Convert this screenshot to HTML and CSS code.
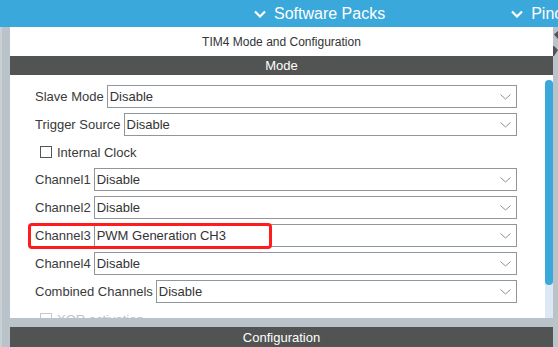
FILE: index.html
```html
<!DOCTYPE html>
<html>
<head>
<meta charset="utf-8">
<link rel="stylesheet" href="styles.css">
</head>
<body>
<div class="app">
  <div class="topbar">
    <div class="tab">
      <svg class="tab-chev" width="12" height="8" viewBox="0 0 12 8"><polyline points="1,1.5 6,6.5 11,1.5" fill="none" stroke="#fff" stroke-width="2.2"/></svg>
      <span>Software Packs</span>
    </div>
    <div class="tab tab-pin">
      <svg class="tab-chev" width="12" height="8" viewBox="0 0 12 8"><polyline points="1,1.5 6,6.5 11,1.5" fill="none" stroke="#fff" stroke-width="2.2"/></svg>
      <span>Pinout &amp; Configuration</span>
    </div>
  </div>
  <div class="workspace">
    <div class="gutter-left"></div>
    <div class="panel">
      <div class="panel-title">TIM4 Mode and Configuration</div>
      <div class="section-bar">Mode</div>
      <div class="mode-body">
        <div class="form">
          <div class="row">
            <span class="label">Slave Mode</span>
            <div class="select"><span>Disable</span><svg class="sel-chev" width="11" height="6" viewBox="0 0 11 6"><polyline points="0.5,0.5 5.5,5 10.5,0.5" fill="none" stroke="#8a8f93" stroke-width="1"/></svg></div>
          </div>
          <div class="row">
            <span class="label">Trigger Source</span>
            <div class="select"><span>Disable</span><svg class="sel-chev" width="11" height="6" viewBox="0 0 11 6"><polyline points="0.5,0.5 5.5,5 10.5,0.5" fill="none" stroke="#8a8f93" stroke-width="1"/></svg></div>
          </div>
          <div class="row row-check">
            <span class="checkbox"></span>
            <span class="label">Internal Clock</span>
          </div>
          <div class="row">
            <span class="label">Channel1</span>
            <div class="select"><span>Disable</span><svg class="sel-chev" width="11" height="6" viewBox="0 0 11 6"><polyline points="0.5,0.5 5.5,5 10.5,0.5" fill="none" stroke="#8a8f93" stroke-width="1"/></svg></div>
          </div>
          <div class="row">
            <span class="label">Channel2</span>
            <div class="select"><span>Disable</span><svg class="sel-chev" width="11" height="6" viewBox="0 0 11 6"><polyline points="0.5,0.5 5.5,5 10.5,0.5" fill="none" stroke="#8a8f93" stroke-width="1"/></svg></div>
          </div>
          <div class="row row-hl">
            <span class="label">Channel3</span>
            <div class="select"><span>PWM Generation CH3</span><svg class="sel-chev" width="11" height="6" viewBox="0 0 11 6"><polyline points="0.5,0.5 5.5,5 10.5,0.5" fill="none" stroke="#8a8f93" stroke-width="1"/></svg></div>
            <div class="highlight"></div>
          </div>
          <div class="row">
            <span class="label">Channel4</span>
            <div class="select"><span>Disable</span><svg class="sel-chev" width="11" height="6" viewBox="0 0 11 6"><polyline points="0.5,0.5 5.5,5 10.5,0.5" fill="none" stroke="#8a8f93" stroke-width="1"/></svg></div>
          </div>
          <div class="row">
            <span class="label">Combined Channels</span>
            <div class="select"><span>Disable</span><svg class="sel-chev" width="11" height="6" viewBox="0 0 11 6"><polyline points="0.5,0.5 5.5,5 10.5,0.5" fill="none" stroke="#8a8f93" stroke-width="1"/></svg></div>
          </div>
          <div class="row row-check disabled">
            <span class="checkbox"></span>
            <span class="label">XOR activation</span>
          </div>
        </div>
        <div class="scrollbar">
          <div class="track"><div class="thumb"></div></div>
        </div>
      </div>
      <div class="sep"></div>
      <div class="section-bar section-config">Configuration</div>
    </div>
    <div class="gutter-right">
      <svg class="collapse" width="5" height="30" viewBox="0 0 5 30"><polygon points="1,4.5 5,1 5,9" fill="#4f5356"/><polygon points="1,16 5,20 1,26" fill="#4f5356"/><rect x="0" y="16" width="1" height="10" fill="#4f5356"/></svg>
    </div>
  </div>
</div>
</body>
</html>
```
FILE: styles.css
```css
* { box-sizing: border-box; }
html, body { margin: 0; padding: 0; }
body {
  width: 558px;
  height: 347px;
  overflow: hidden;
  font-family: "Liberation Sans", Arial, sans-serif;
  background: #fff;
}
.app {
  display: flex;
  flex-direction: column;
  height: 347px;
}
.topbar {
  height: 27px;
  flex: none;
  background: #3aa8db;
  display: flex;
  align-items: center;
  padding-left: 254px;
  gap: 126px;
  overflow: hidden;
  white-space: nowrap;
  color: #fff;
  font-size: 16px;
}
.tab {
  display: flex;
  align-items: center;
  gap: 8px;
  flex: none;
}
.tab-chev { display: block; margin-top: 1px; }
.workspace {
  flex: 1;
  display: flex;
  min-height: 0;
  background: #b9c3c9;
}
.gutter-left {
  width: 10px;
  flex: none;
  background: #b9c3c9;
  border-left: 2px solid #c9d1d6;
}
.gutter-right {
  width: 5px;
  flex: none;
  background: #b9c3c9;
}
.collapse { display: block; margin-top: 3px; }
.panel {
  flex: 1;
  display: flex;
  flex-direction: column;
  min-width: 0;
}
.panel-title {
  height: 29px;
  flex: none;
  background: #fff;
  color: #333;
  font-size: 12px;
  display: flex;
  align-items: center;
  justify-content: center;
  padding-top: 1px;
}
.section-bar {
  height: 19px;
  flex: none;
  background: #525453;
  color: #fff;
  font-size: 13px;
  display: flex;
  align-items: center;
  justify-content: center;
}
.section-config { height: 20px; }
.mode-body {
  height: 243px;
  flex: none;
  display: flex;
  background: #fff;
  overflow: hidden;
}
.form {
  flex: 1;
  padding: 10px 28px 0 25px;
  display: flex;
  flex-direction: column;
  gap: 5px;
  color: #3a3a3a;
  font-size: 13px;
}
.row {
  height: 23px;
  flex: none;
  display: flex;
  align-items: center;
  gap: 3px;
  white-space: nowrap;
}
.row-hl { position: relative; }
.highlight {
  position: absolute;
  left: -7px;
  top: -1px;
  width: 244px;
  height: 26px;
  border: 3px solid #ff1c1c;
  border-radius: 4px;
}
.select {
  flex: 1;
  height: 23px;
  border: 1px solid #90979c;
  display: flex;
  align-items: center;
  justify-content: space-between;
  padding: 0 5px 0 2px;
  color: #333;
  background: #fff;
}
.sel-chev { display: block; margin-top: 1px; }
.row-check {
  height: 22px;
  padding-left: 5px;
  gap: 5px;
}
.checkbox {
  width: 12px;
  height: 12px;
  border: 1px solid #555;
  background: #fff;
  flex: none;
}
.disabled { color: #c2c2c2; }
.disabled .checkbox { border-color: #c8c8c8; }
.scrollbar {
  width: 8px;
  flex: none;
  padding-top: 5px;
  display: flex;
}
.track {
  flex: 1;
  background: #dce9f4;
  border-radius: 4px 4px 0 0;
}
.thumb {
  height: 205px;
  background: #3aa8db;
  border-radius: 4px;
}
.sep {
  height: 9px;
  flex: none;
  background: #b9c3c9;
}
```
